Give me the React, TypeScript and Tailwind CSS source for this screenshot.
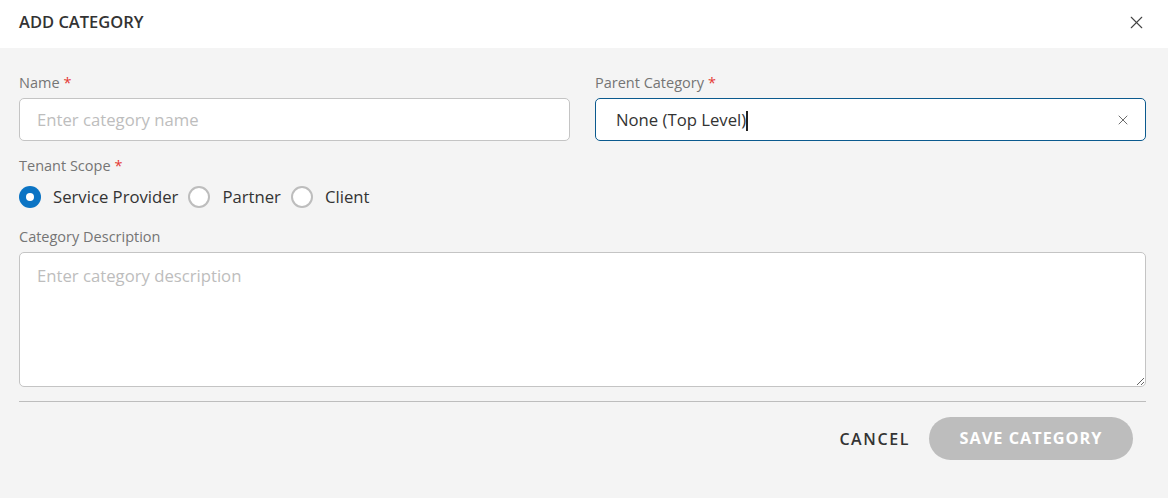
import React, { useState } from 'react';
import { X } from 'lucide-react';

const scopes = ['Service Provider', 'Partner', 'Client'];

const Label: React.FC<{ text: string; required?: boolean }> = ({ text, required }) => (
  <label className="block text-[14.5px] leading-[20px] text-[#757575] mb-[5px]">
    {text}
    {required && <span className="text-[#e53935] ml-[4px]">*</span>}
  </label>
);

const App: React.FC = () => {
  const [scope, setScope] = useState('Service Provider');

  return (
    <div className="w-[1168px] h-[498px] bg-[#f4f4f4] font-['Open_Sans',sans-serif] text-[#333]">
      <div className="h-[48px] bg-white flex items-center justify-between pl-[19px] pr-[21px] pb-[3px]">
        <h1 className="text-[16.5px] font-semibold text-[#333]">ADD CATEGORY</h1>
        <X size={21} strokeWidth={1.3} className="text-[#444]" />
      </div>

      <div className="pl-[19px] pr-[22px] pt-[25px]">
        <div className="grid grid-cols-2 gap-[25px]">
          <div>
            <Label text="Name" required />
            <input
              placeholder="Enter category name"
              className="w-full h-[43px] rounded-[5px] border border-[#c4c4c4] bg-white px-[17px] text-[16.7px] placeholder:text-[#bdbdbd] outline-none"
            />
          </div>
          <div>
            <Label text="Parent Category" required />
            <div className="h-[43px] rounded-[5px] border border-[#0b5a8e] bg-white flex items-center justify-between pl-[20px] pr-[14px]">
              <span className="text-[16.7px] text-[#333]">
                None (Top Level)<span className="inline-block w-[2px] h-[20px] bg-[#222] align-middle -mt-[2px]" />
              </span>
              <X size={16} strokeWidth={1.3} className="text-[#555]" />
            </div>
          </div>
        </div>

        <div className="mt-[15px]">
          <Label text="Tenant Scope" required />
          <div className="flex items-center h-[28px] mt-[7px]">
            {scopes.map((s) => (
              <button key={s} onClick={() => setScope(s)} className="flex items-center mr-[10px]">
                {scope === s ? (
                  <span className="w-[22px] h-[22px] rounded-full bg-[#0b74c4] flex items-center justify-center">
                    <span className="w-[8px] h-[8px] rounded-full bg-white" />
                  </span>
                ) : (
                  <span className="w-[22px] h-[22px] rounded-full border-2 border-[#bdbdbd] bg-white" />
                )}
                <span className="ml-[12px] text-[16.7px] text-[#333]">{s}</span>
              </button>
            ))}
          </div>
        </div>

        <div className="mt-[16px]">
          <Label text="Category Description" />
          <textarea
            placeholder="Enter category description"
            className="block w-full h-[135px] rounded-[5px] border border-[#c4c4c4] bg-white px-[17px] py-[10px] text-[16.7px] placeholder:text-[#bdbdbd] outline-none"
          />
        </div>

        <div className="mt-[14px] border-t border-[#bdbdbd]" />

        <div className="flex justify-end items-center mt-[15px] pr-[13px]">
          <button className="text-[16px] font-semibold tracking-[1.6px] text-[#333] mr-[19px]">CANCEL</button>
          <button className="h-[43px] w-[204px] rounded-full bg-[#bdbdbd] text-white text-[16.3px] font-bold tracking-[1px]">
            SAVE CATEGORY
          </button>
        </div>
      </div>
    </div>
  );
};

export default App;
